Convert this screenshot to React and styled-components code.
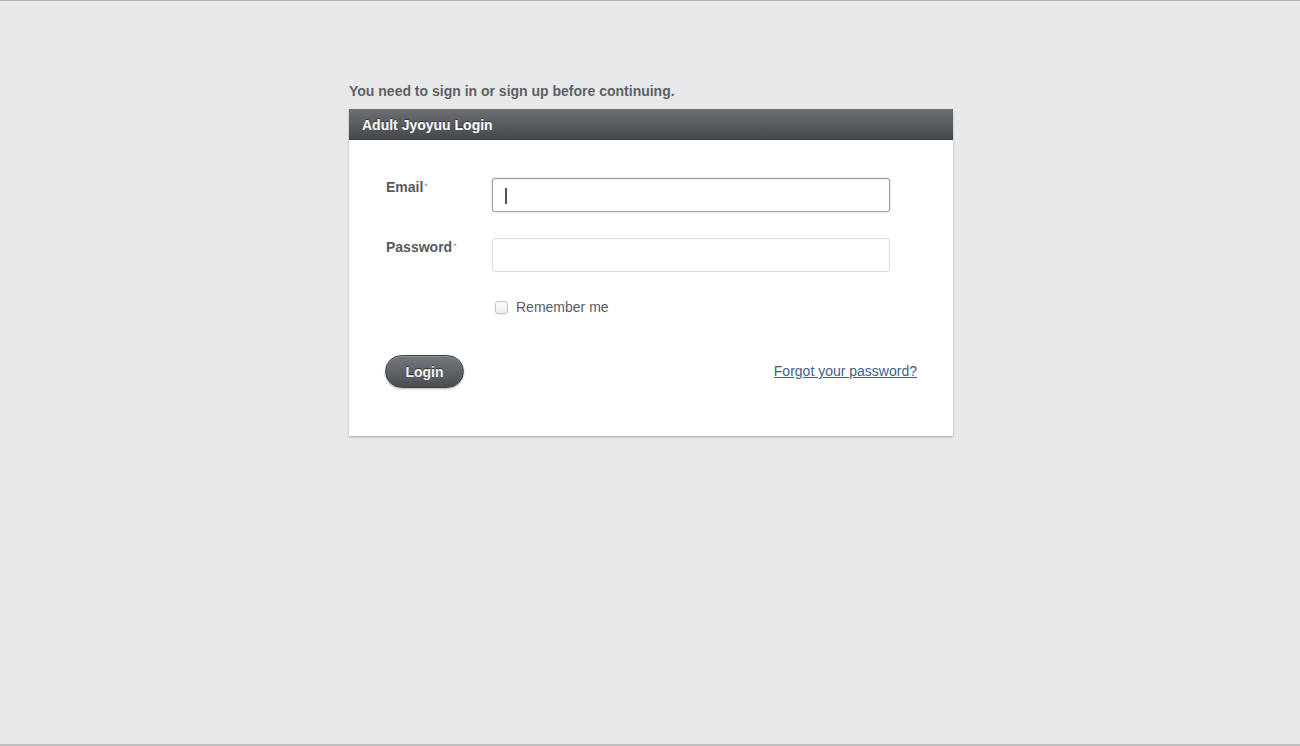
import React from "react";
import styled, { createGlobalStyle } from "styled-components";

const Global = createGlobalStyle`
  html, body { margin: 0; padding: 0; }
  body {
    background: #e7e8e9;
    font-family: "Liberation Sans", Arial, Helvetica, sans-serif;
  }
`;

const Page = styled.div`
  box-sizing: border-box;
  min-height: 746px;
  border-top: 1px solid #b3b4b6;
  border-bottom: 2px solid #bdbec0;
  background: #e7e8e9;
  padding-top: 82px;
`;

const Container = styled.div`
  width: 604px;
  margin: 0 auto 0 calc(50% - 301px);
`;

const Notice = styled.p`
  margin: 0 0 9px 0;
  font-size: 14px;
  font-weight: bold;
  line-height: 17px;
  color: #5f6062;
`;

const Card = styled.div`
  background: #fff;
  box-shadow: 0 1px 2px rgba(0, 0, 0, 0.28);
`;

const CardHeader = styled.div`
  height: 31px;
  box-sizing: border-box;
  padding: 1px 13px 0;
  display: flex;
  align-items: center;
  background: linear-gradient(#6d7075, #44474b);
  border-bottom: 1px solid #3b3d40;
  color: #fff;
  font-size: 14px;
  font-weight: bold;
  text-shadow: 0 -1px 0 rgba(0, 0, 0, 0.5);
`;

const CardBody = styled.form`
  padding: 38px 36px 48px 37px;
`;

const Row = styled.div`
  display: grid;
  grid-template-columns: 106px 398px;
  align-items: start;
  margin-bottom: ${(p) => p.$gap || 0}px;
`;

const Label = styled.label`
  padding-top: 1px;
  font-size: 14px;
  font-weight: bold;
  color: #58595b;
  line-height: 16px;
`;

const Req = styled.sup`
  font-size: 9px;
  color: #9a9b9d;
  font-weight: normal;
  vertical-align: top;
  position: relative;
  top: -1px;
  margin-left: 1px;
`;

const Field = styled.div`
  position: relative;
  height: 34px;
  box-sizing: border-box;
  border: 1px solid ${(p) => (p.$focused ? "#9da2a8" : "#dcdddf")};
  border-radius: 3px;
  box-shadow: ${(p) =>
    p.$focused
      ? "0 0 2px rgba(90, 100, 110, 0.45), inset 0 1px 1px rgba(0,0,0,0.08)"
      : "inset 0 1px 1px rgba(0,0,0,0.03)"};
  background: #fff;
`;

const Input = styled.input`
  width: 100%;
  height: 100%;
  box-sizing: border-box;
  border: none;
  outline: none;
  background: transparent;
  padding: 0 11px;
  font-family: inherit;
  font-size: 14px;
  caret-color: transparent;
`;

const Caret = styled.span`
  position: absolute;
  left: 12px;
  top: 9px;
  width: 1.5px;
  height: 16px;
  background: #555;
`;

const CheckRow = styled.div`
  display: flex;
  align-items: center;
  gap: 8px;
  margin-left: 106px;
  margin-top: 27px;
`;

const Box = styled.span`
  width: 11px;
  height: 11px;
  margin-left: 3px;
  border: 1px solid #c4c5c7;
  border-radius: 3px;
  background: linear-gradient(#fff, #ececec);
  box-shadow: 0 1px 1px rgba(0, 0, 0, 0.08);
`;

const CheckText = styled.span`
  font-size: 14px;
  color: #58595b;
  line-height: 16px;
`;

const Actions = styled.div`
  display: flex;
  justify-content: space-between;
  align-items: center;
  margin-top: 40px;
  margin-left: -1px;
`;

const LoginButton = styled.button`
  width: 79px;
  height: 33px;
  border: 1px solid #3f4245;
  border-radius: 17px;
  background: linear-gradient(#74777c, #4a4d51);
  box-shadow: inset 0 1px 0 rgba(255, 255, 255, 0.2), 0 1px 2px rgba(0,0,0,0.3);
  color: #f2f2f2;
  font-family: inherit;
  font-size: 14px;
  font-weight: bold;
  text-shadow: 0 -1px 0 rgba(0, 0, 0, 0.55);
  padding: 0;
  cursor: pointer;
`;

const Forgot = styled.a`
  font-size: 14px;
  color: #3d5f86;
  text-decoration: underline;
  margin-top: -1px;
`;

export default function App() {
  return (
    <>
      <Global />
      <Page>
        <Container>
          <Notice>You need to sign in or sign up before continuing.</Notice>
          <Card>
            <CardHeader>Adult Jyoyuu Login</CardHeader>
            <CardBody onSubmit={(e) => e.preventDefault()}>
              <Row $gap={26}>
                <Label>
                  Email<Req>*</Req>
                </Label>
                <Field $focused>
                  <Input type="email" />
                  <Caret />
                </Field>
              </Row>
              <Row>
                <Label>
                  Password<Req>*</Req>
                </Label>
                <Field>
                  <Input type="password" />
                </Field>
              </Row>
              <CheckRow>
                <Box />
                <CheckText>Remember me</CheckText>
              </CheckRow>
              <Actions>
                <LoginButton type="submit">Login</LoginButton>
                <Forgot href="#">Forgot your password?</Forgot>
              </Actions>
            </CardBody>
          </Card>
        </Container>
      </Page>
    </>
  );
}
